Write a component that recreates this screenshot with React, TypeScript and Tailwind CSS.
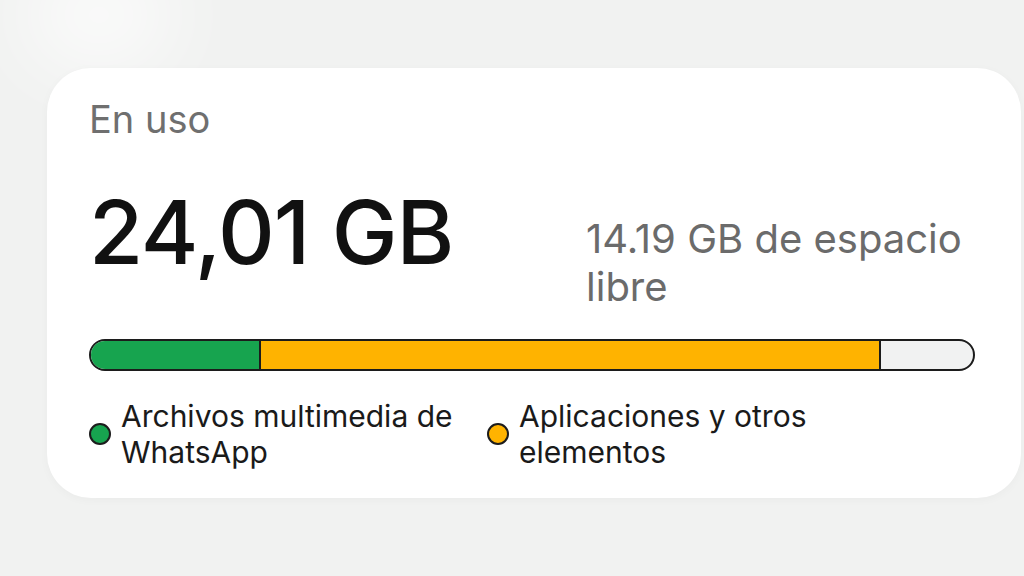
const font = { fontFamily: "Inter, 'Noto Sans', sans-serif" };

function Dot({ color }: { color: string }) {
  return (
    <span
      className={`h-[22px] w-[22px] shrink-0 rounded-full border-2 border-[#1c1c1c] ${color}`}
    />
  );
}

export default function App() {
  return (
    <div
      className="relative h-[576px] w-[1024px] overflow-hidden bg-[#f1f2f1] pt-[68px] pl-[47px]"
      style={font}
    >
      {/* soft highlight in the top-left corner */}
      <div className="absolute -top-10 left-6 h-[110px] w-[150px] rounded-full bg-white/70 blur-2xl" />

      <div className="relative flex h-[430px] w-[974px] flex-col rounded-[44px] bg-white pl-[42px] pt-[29px] shadow-[0_2px_10px_rgba(0,0,0,0.03)]">
        <p className="text-[38px] leading-[44px] text-[#6f6f6f]">En uso</p>

        <div className="mt-[46px] flex">
          <p className="w-[497px] text-[88px] font-medium leading-[90px] tracking-[-1px] text-[#111]">
            24,01 GB
          </p>
          <p className="mt-[28px] w-[400px] text-[40px] leading-[48px] text-[#6b6b6b]">
            14.19 GB de espacio libre
          </p>
        </div>

        <div className="mt-[28px] flex h-[32px] w-[886px] overflow-hidden rounded-full border-2 border-[#1c1c1c] bg-[#f1f2f2]">
          <div className="w-[168px] bg-[#17a44f]" />
          <div className="w-[622px] border-l-2 border-r-2 border-[#1c1c1c] bg-[#ffb300]" />
        </div>

        <div className="mt-[27px] flex text-[30px] leading-[36px] text-[#1a1a1a]">
          <div className="flex w-[398px] items-center gap-[10px]">
            <Dot color="bg-[#17a44f]" />
            <p className="w-[350px]">Archivos multimedia de WhatsApp</p>
          </div>
          <div className="flex items-center gap-[10px]">
            <Dot color="bg-[#ffb300]" />
            <p className="w-[310px]">Aplicaciones y otros elementos</p>
          </div>
        </div>
      </div>
    </div>
  );
}
